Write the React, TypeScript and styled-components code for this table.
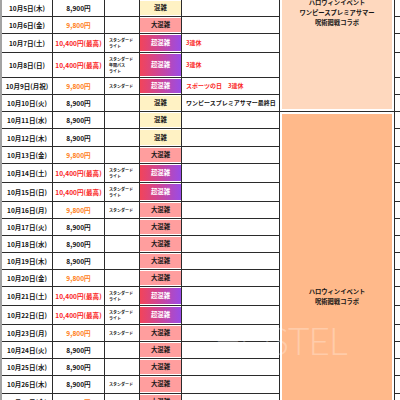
import React from 'react';
import styled, { createGlobalStyle, css } from 'styled-components';

type PriceTone = 'normal' | 'high' | 'peak';
type Crowd = 'busy' | 'very' | 'extreme';

type Day = {
  date: string;
  price: string;
  tone: PriceTone;
  ticket?: string[];
  crowd: Crowd;
  note?: string;
  noteRed?: boolean;
};

const STD_LITE = ['スタンダード', 'ライト'];

const days: Day[] = [
  { date: '10月5日(木)', price: '8,900円', tone: 'normal', crowd: 'busy' },
  { date: '10月6日(金)', price: '9,800円', tone: 'high', crowd: 'very' },
  { date: '10月7日(土)', price: '10,400円(最高)', tone: 'peak', ticket: STD_LITE, crowd: 'extreme', note: '3連休', noteRed: true },
  { date: '10月8日(日)', price: '10,400円(最高)', tone: 'peak', ticket: ['スタンダード', '年間パス', 'ライト'], crowd: 'extreme', note: '3連休', noteRed: true },
  { date: '10月9日(月祝)', price: '9,800円', tone: 'high', ticket: ['スタンダード'], crowd: 'extreme', note: 'スポーツの日　3連休', noteRed: true },
  { date: '10月10日(火)', price: '8,900円', tone: 'normal', crowd: 'busy', note: 'ワンピースプレミアサマー最終日' },
  { date: '10月11日(水)', price: '8,900円', tone: 'normal', crowd: 'busy' },
  { date: '10月12日(木)', price: '8,900円', tone: 'normal', crowd: 'busy' },
  { date: '10月13日(金)', price: '9,800円', tone: 'high', crowd: 'very' },
  { date: '10月14日(土)', price: '10,400円(最高)', tone: 'peak', ticket: STD_LITE, crowd: 'extreme' },
  { date: '10月15日(日)', price: '10,400円(最高)', tone: 'peak', ticket: STD_LITE, crowd: 'extreme' },
  { date: '10月16日(月)', price: '9,800円', tone: 'high', ticket: ['スタンダード'], crowd: 'very' },
  { date: '10月17日(火)', price: '8,900円', tone: 'normal', crowd: 'very' },
  { date: '10月18日(水)', price: '8,900円', tone: 'normal', crowd: 'very' },
  { date: '10月19日(木)', price: '8,900円', tone: 'normal', crowd: 'very' },
  { date: '10月20日(金)', price: '9,800円', tone: 'high', crowd: 'very' },
  { date: '10月21日(土)', price: '10,400円(最高)', tone: 'peak', ticket: STD_LITE, crowd: 'extreme' },
  { date: '10月22日(日)', price: '10,400円(最高)', tone: 'peak', ticket: STD_LITE, crowd: 'extreme' },
  { date: '10月23日(月)', price: '9,800円', tone: 'high', ticket: ['スタンダード'], crowd: 'very' },
  { date: '10月24日(火)', price: '8,900円', tone: 'normal', crowd: 'very' },
  { date: '10月25日(水)', price: '8,900円', tone: 'normal', crowd: 'very' },
  { date: '10月26日(木)', price: '8,900円', tone: 'normal', ticket: ['スタンダード'], crowd: 'very' },
  { date: '10月27日(金)', price: '9,800円', tone: 'high', crowd: 'very' },
  { date: '10月28日(土)', price: '10,400円(最高)', tone: 'peak', ticket: STD_LITE, crowd: 'extreme' },
  { date: '10月29日(日)', price: '10,400円(最高)', tone: 'peak', ticket: STD_LITE, crowd: 'extreme' },
  { date: '10月30日(月)', price: '9,800円', tone: 'high', ticket: ['スタンダード'], crowd: 'very' },
  { date: '10月31日(火)', price: '8,900円', tone: 'normal', crowd: 'very' },
];

const crowdLabel: Record<Crowd, string> = {
  busy: '混雑',
  very: '大混雑',
  extreme: '超混雑',
};

const GlobalStyle = createGlobalStyle`
  body {
    margin: 0;
    overflow: hidden;
    background: #fff;
    font-family: "Noto Sans CJK JP", "Noto Sans", sans-serif;
  }
`;

function App() {
  return (
    <Page>
      <GlobalStyle />
      <Calendar>
        {days.map((d, i) => (
          <React.Fragment key={d.date}>
            <DateCell>{d.date}</DateCell>
            <PriceCell $tone={d.tone}>{d.price}</PriceCell>
            <TicketCell>
              {d.ticket?.map((t) => (
                <div key={t}>{t}</div>
              ))}
            </TicketCell>
            <CrowdCell $level={d.crowd}>{crowdLabel[d.crowd]}</CrowdCell>
            <NoteCell $red={d.noteRed}>{d.note}</NoteCell>
            {i === 0 && (
              <EventCell $span={6} $shade="light" $open="top">
                <EventText $lift>
                  ハロウィンイベント
                  <br />
                  ワンピースプレミアサマー
                  <br />
                  呪術廻戦コラボ
                </EventText>
              </EventCell>
            )}
            {i === 6 && (
              <EventCell $span={21} $shade="deep" $open="bottom">
                <EventText>
                  ハロウィンイベント
                  <br />
                  呪術廻戦コラボ
                </EventText>
              </EventCell>
            )}
            <BlankCell />
          </React.Fragment>
        ))}
      </Calendar>
      <Watermark>HOSTEL</Watermark>
    </Page>
  );
}

const Page = styled.div`
  position: relative;
  width: 400px;
  height: 400px;
  overflow: hidden;
`;

const Calendar = styled.div`
  display: grid;
  grid-template-columns: 51px 52px 35px 42px 98px 115px 40px;
  grid-auto-rows: minmax(17.1px, auto);
  width: max-content;
  border-left: 2px solid #a3a3a3;
  font-weight: 700;
  color: #151515;
`;

const Cell = styled.div`
  box-sizing: border-box;
  display: flex;
  align-items: center;
  border-right: 1px solid #2b2b2b;
  border-bottom: 1px solid #2b2b2b;
  white-space: nowrap;
  line-height: 8px;
`;

const DateCell = styled(Cell)`
  grid-column: 1;
  justify-content: center;
  font-size: 6.5px;
`;

const priceColor: Record<PriceTone, string> = {
  normal: '#151515',
  high: '#ff801a',
  peak: '#fa1e1e',
};

const PriceCell = styled(Cell)<{ $tone: PriceTone }>`
  grid-column: 2;
  justify-content: center;
  font-size: 6.6px;
  color: ${(p) => priceColor[p.$tone]};
`;

const TicketCell = styled(Cell)`
  grid-column: 3;
  flex-direction: column;
  align-items: flex-start;
  justify-content: center;
  padding: 3px 0 3px 4px;
  font-size: 4px;
  line-height: 6px;
`;

const crowdFill: Record<Crowd, ReturnType<typeof css>> = {
  busy: css`
    background: #fff2c4;
    color: #1a1a1a;
  `,
  very: css`
    background: #ff9e9e;
    color: #1a1a1a;
  `,
  extreme: css`
    background: linear-gradient(90deg, #f2445a 0%, #c646a2 55%, #9a4ce6 100%);
    color: #fff;
  `,
};

const CrowdCell = styled(Cell)<{ $level: Crowd }>`
  grid-column: 4;
  justify-content: center;
  font-size: 6.4px;
  ${(p) => crowdFill[p.$level]}
  box-shadow: inset 0 1px 0 #fff, inset 0 -1px 0 #fff;
`;

const NoteCell = styled(Cell)<{ $red?: boolean }>`
  grid-column: 5;
  padding-left: 4px;
  font-size: 6px;
  color: ${(p) => (p.$red ? '#fa1e1e' : '#151515')};
`;

const EventCell = styled(Cell)<{
  $span: number;
  $shade: 'light' | 'deep';
  $open: 'top' | 'bottom';
}>`
  grid-column: 6;
  grid-row: span ${(p) => p.$span};
  justify-content: center;
  align-items: ${(p) => (p.$open === 'top' ? 'flex-start' : 'center')};
  text-align: center;
  background: ${(p) => (p.$shade === 'light' ? '#fed8be' : '#ffb98a')};
  box-shadow: inset 2px 0 0 #fff, inset -2px 0 0 #fff,
    ${(p) => (p.$open === 'top' ? 'inset 0 -2px 0 #fff' : 'inset 0 2px 0 #fff')};
`;

const EventText = styled.div<{ $lift?: boolean }>`
  font-size: 6.3px;
  line-height: 10px;
  color: #161616;
  margin-top: ${(p) => (p.$lift ? '-2px' : '0')};
`;

const BlankCell = styled(Cell)`
  grid-column: 7;
`;

const Watermark = styled.div`
  position: absolute;
  left: 214px;
  top: 318px;
  font-family: Lato, "Liberation Sans", sans-serif;
  font-weight: 300;
  font-size: 37px;
  letter-spacing: -1px;
  color: rgba(255, 255, 255, 0.28);
  pointer-events: none;
`;

export default App;
